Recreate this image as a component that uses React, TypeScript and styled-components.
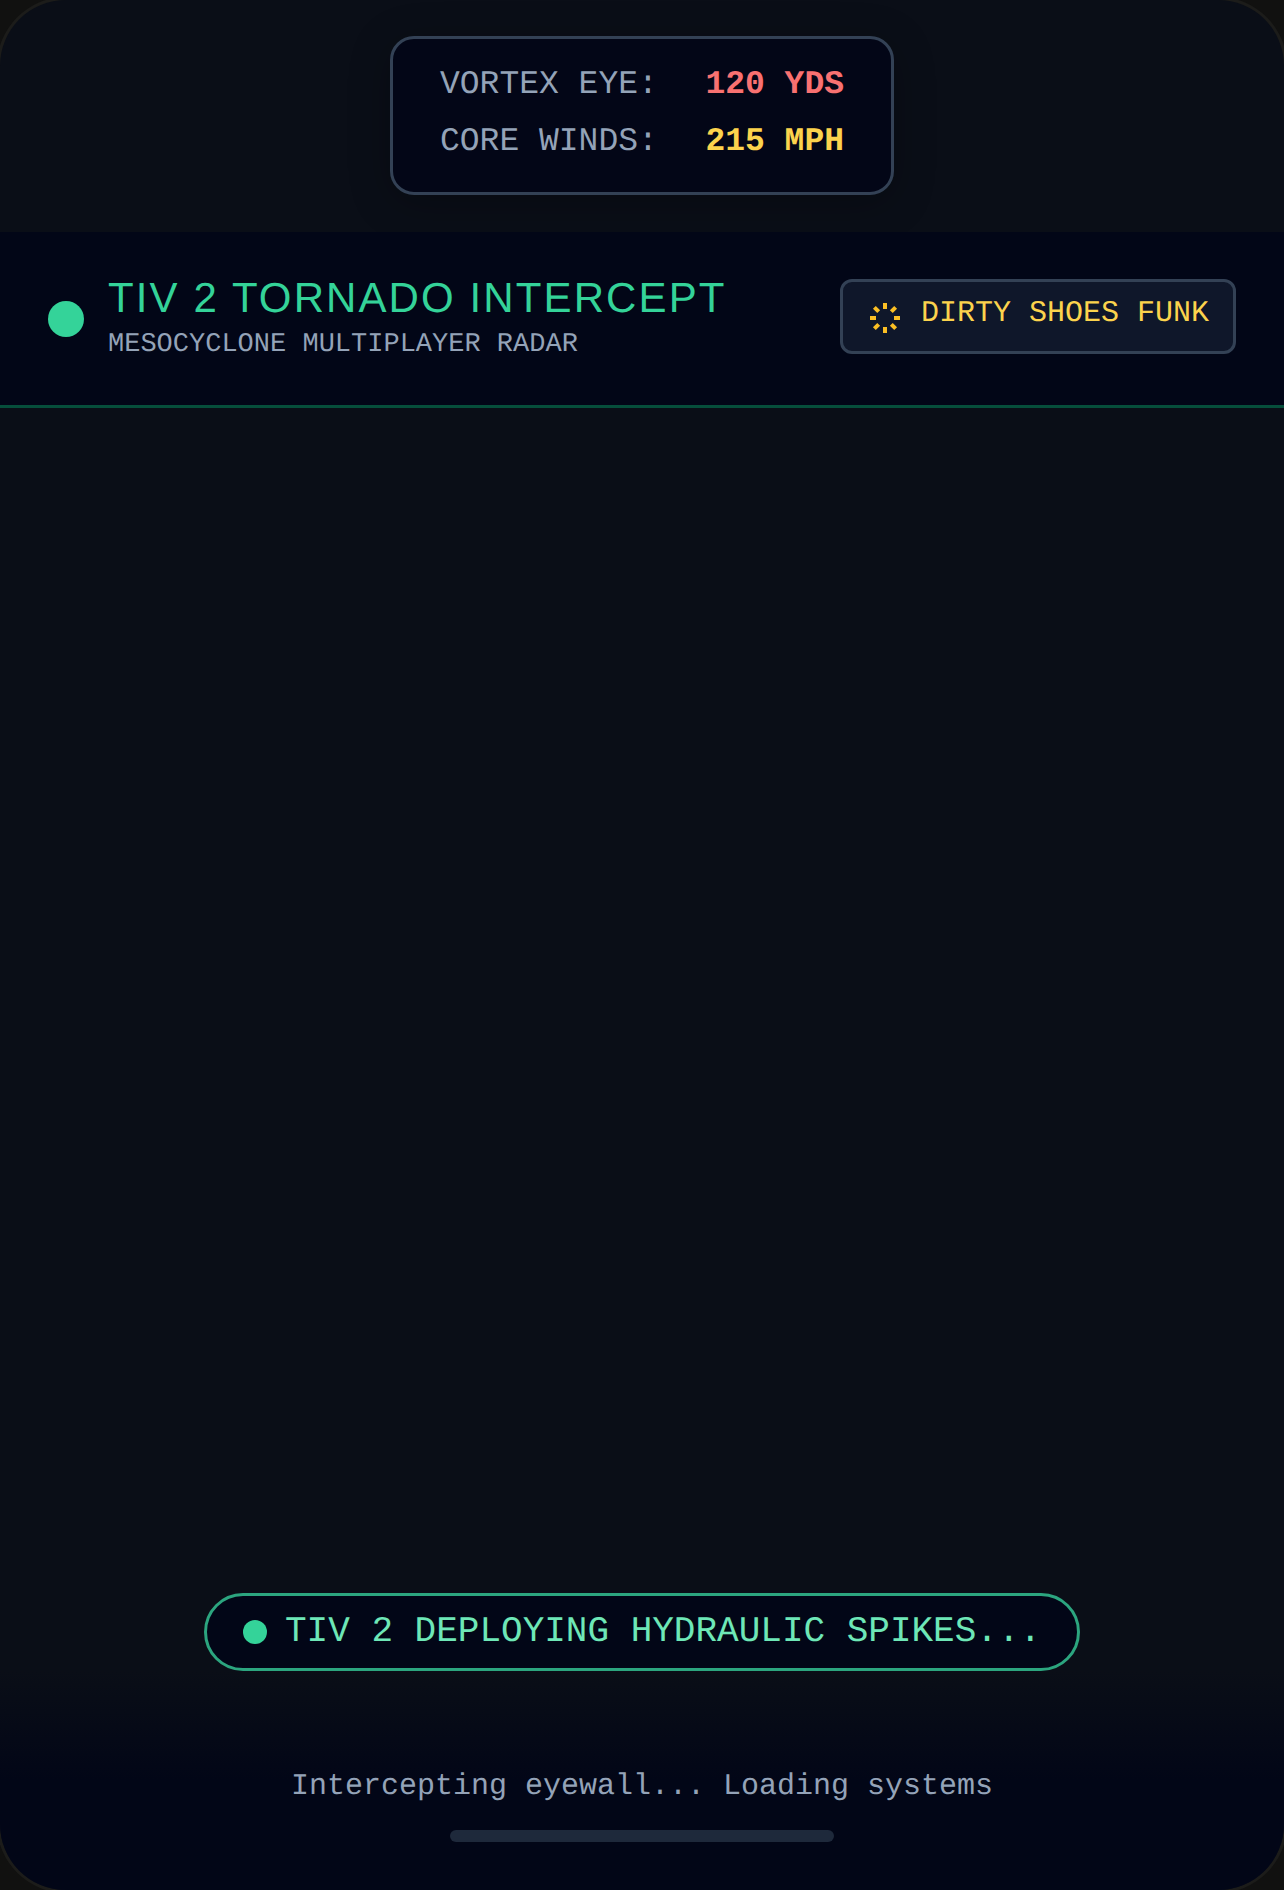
import React from "react";
import styled, { createGlobalStyle } from "styled-components";

const Global = createGlobalStyle`
  html, body { margin: 0; padding: 0; background: #111110; }
  * { box-sizing: border-box; }
  body { text-rendering: geometricPrecision; -webkit-font-smoothing: antialiased; }
`;

const mono = `"Liberation Mono", monospace`;

const Device = styled.div`
  width: 1284px;
  height: 1890px;
  background: #111110;
  overflow: hidden;
`;

const Screen = styled.div`
  width: 100%;
  height: 100%;
  display: flex;
  flex-direction: column;
  border-radius: 66px;
  box-shadow: 0 0 0 3px #1c1c1a;
  overflow: hidden;
  background: #0a0e17;
`;

const TopZone = styled.div`
  height: 232px;
  flex: none;
  display: flex;
  justify-content: center;
  padding-top: 36px;
`;

const StatCard = styled.div`
  width: 504px;
  height: 159px;
  display: flex;
  flex-direction: column;
  gap: 21px;
  padding: 28px 47px 0;
  background: #030617;
  border: 3px solid #334155;
  border-radius: 24px;
  box-shadow: 0 8px 40px rgba(0, 0, 0, 0.25);
`;

const StatRow = styled.div`
  display: flex;
  justify-content: space-between;
  font: 33px/36px ${mono};
`;

const StatLabel = styled.span`
  color: #94a3b8;
`;

const StatValue = styled.span<{ $color: string }>`
  color: ${(p) => p.$color};
  font-weight: 700;
`;

const Header = styled.header`
  height: 176px;
  flex: none;
  display: flex;
  align-items: center;
  justify-content: space-between;
  padding: 0 48px;
  background: #020617;
  border-bottom: 3px solid #064e3b;
`;

const Brand = styled.div`
  display: flex;
  align-items: center;
  gap: 24px;
`;

const StatusDot = styled.span<{ $size: number }>`
  width: ${(p) => p.$size}px;
  height: ${(p) => p.$size}px;
  flex: none;
  border-radius: 50%;
  background: #34d399;
`;

const BrandText = styled.div`
  display: flex;
  flex-direction: column;
  gap: 5px;
`;

const Title = styled.h1`
  margin: 0;
  font: 400 42px/48px "Liberation Sans", sans-serif;
  letter-spacing: 2.1px;
  color: #34d399;
`;

const Subtitle = styled.div`
  font: 27px/36px ${mono};
  color: #94a3b8;
`;

const Chip = styled.div`
  width: 396px;
  height: 75px;
  display: flex;
  align-items: center;
  gap: 18px;
  padding: 0 24px;
  margin-top: -5px;
  background: #0f172a;
  border: 3px solid #334155;
  border-radius: 12px;
`;

const ChipIcon = styled.svg`
  width: 36px;
  height: 36px;
  flex: none;
  margin-top: 3px;
  fill: none;
  stroke: #fbbf24;
  stroke-width: 2.67;
`;

const ChipLabel = styled.span`
  font: 30px/36px ${mono};
  color: #fcd34d;
  white-space: nowrap;
  margin-top: -5px;
`;

const Main = styled.main`
  flex: 1;
  display: flex;
  align-items: flex-end;
  justify-content: center;
`;

const Pill = styled.div`
  width: 876px;
  height: 78px;
  display: flex;
  align-items: center;
  gap: 18px;
  padding: 0 36px;
  background: #020617;
  border: 3px solid #2ca57f;
  border-radius: 39px;
`;

const PillText = styled.span`
  font: 36px/42px ${mono};
  color: #6ee7b7;
  white-space: nowrap;
`;

const Footer = styled.footer`
  height: 219px;
  flex: none;
  display: flex;
  flex-direction: column;
  align-items: center;
  padding-top: 98px;
  background: linear-gradient(to bottom, #0a0e17, #020617 50%);
`;

const FooterText = styled.div`
  font: 30px/36px ${mono};
  color: #94a3b8;
`;

const HomeBar = styled.div`
  width: 384px;
  height: 12px;
  margin-top: 25px;
  border-radius: 6px;
  background: #1e293b;
`;

export default function App() {
  return (
    <Device>
      <Global />
      <Screen>
        <TopZone>
          <StatCard>
            <StatRow>
              <StatLabel>VORTEX EYE:</StatLabel>
              <StatValue $color="#f87171">120 YDS</StatValue>
            </StatRow>
            <StatRow>
              <StatLabel>CORE WINDS:</StatLabel>
              <StatValue $color="#fcd34d">215 MPH</StatValue>
            </StatRow>
          </StatCard>
        </TopZone>
        <Header>
          <Brand>
            <StatusDot $size={36} />
            <BrandText>
              <Title>TIV 2 TORNADO INTERCEPT</Title>
              <Subtitle>MESOCYCLONE MULTIPLAYER RADAR</Subtitle>
            </BrandText>
          </Brand>
          <Chip>
            <ChipIcon viewBox="0 0 24 24">
              <path d="M12 2v4M16.2 7.8l2.9-2.9M18 12h4M16.2 16.2l2.9 2.9M12 18v4M4.9 19.1l2.9-2.9M2 12h4M4.9 4.9l2.9 2.9" />
            </ChipIcon>
            <ChipLabel>DIRTY SHOES FUNK</ChipLabel>
          </Chip>
        </Header>
        <Main>
          <Pill>
            <StatusDot $size={24} />
            <PillText>TIV 2 DEPLOYING HYDRAULIC SPIKES...</PillText>
          </Pill>
        </Main>
        <Footer>
          <FooterText>Intercepting eyewall... Loading systems</FooterText>
          <HomeBar />
        </Footer>
      </Screen>
    </Device>
  );
}
